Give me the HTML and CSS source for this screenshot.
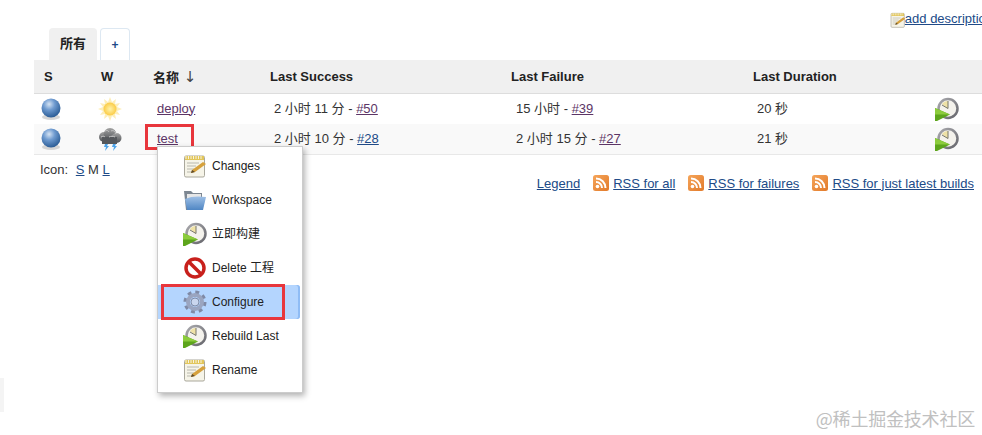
FILE: index.html
```html
<!DOCTYPE html>
<html lang="en">
<head>
<meta charset="UTF-8">
<meta name="viewport" content="width=device-width, initial-scale=1.0">
<title>Jenkins</title>
<link rel="stylesheet" href="styles.css">
</head>
<body>

<svg class="sprites" width="0" height="0" aria-hidden="true">
    <defs>
        <radialGradient id="ballFill" cx="40%" cy="30%" r="75%">
            <stop offset="0" stop-color="#d5e3f3"/>
            <stop offset="0.4" stop-color="#6f9bd0"/>
            <stop offset="1" stop-color="#23558f"/>
        </radialGradient>
        <radialGradient id="sunFill" cx="50%" cy="50%" r="50%">
            <stop offset="0" stop-color="#fff3a8"/>
            <stop offset="1" stop-color="#fbcb45"/>
        </radialGradient>
        <linearGradient id="cloudFill" x1="0" y1="0" x2="0" y2="1">
            <stop offset="0" stop-color="#a2a2a2"/>
            <stop offset="1" stop-color="#4e5155"/>
        </linearGradient>
        <linearGradient id="ringFill" x1="0" y1="0" x2="1" y2="1">
            <stop offset="0" stop-color="#a9a9ad"/>
            <stop offset="1" stop-color="#66666c"/>
        </linearGradient>
        <linearGradient id="rssFill" x1="0" y1="0" x2="1" y2="1">
            <stop offset="0" stop-color="#f5a55a"/>
            <stop offset="1" stop-color="#e27a2a"/>
        </linearGradient>
        <linearGradient id="folderFill" x1="0" y1="0" x2="0" y2="1">
            <stop offset="0" stop-color="#9fc0e6"/>
            <stop offset="1" stop-color="#4f86c4"/>
        </linearGradient>
    </defs>
    <symbol id="i-ball" viewBox="0 0 24 24">
        <ellipse cx="12" cy="20" rx="9" ry="3" fill="#bbb" opacity="0.6"/>
        <circle cx="12" cy="11" r="9.5" fill="url(#ballFill)"/>
    </symbol>
    <symbol id="i-sun" viewBox="0 0 24 24">
        <path d="M12 0l2 5 4-3-1 5 5-1-3 4 5 2-5 2 3 4-5-1 1 5-4-3-2 5-2-5-4 3 1-5-5 1 3-4-5-2 5-2-3-4 5 1-1-5 4 3z" fill="#fdeeb8"/>
        <circle cx="12" cy="12" r="6.5" fill="url(#sunFill)"/>
    </symbol>
    <symbol id="i-storm" viewBox="0 0 24 24">
        <circle cx="6" cy="10" r="5" fill="url(#cloudFill)"/>
        <circle cx="12" cy="7.500" r="6.500" fill="url(#cloudFill)"/>
        <circle cx="18.500" cy="11" r="5" fill="url(#cloudFill)"/>
        <rect x="4" y="10" width="15" height="7" fill="#55585c"/>
        <path d="M6 5c2-2 4-2 5 0M13 4c2-1 4 0 5 3M3 10c2-1 3-1 4 0M11 10c2-1 4-1 6 0" fill="none" stroke="#c8c8c8"/>
        <path d="M7 17h3l-1 2h2l-4 5 1-4H6zM15 17h3l-1 2h2l-4 5 1-4h-2z" fill="#4da3e8"/>
    </symbol>
    <symbol id="i-clock" viewBox="0 0 24 24">
        <circle cx="13" cy="11.500" r="9.500" fill="#f4f2ec" stroke="url(#ringFill)" stroke-width="2.500"/>
        <path d="M13 11.500V4a7.500 7.500 0 0 0-6 3z" fill="#efe2a6"/>
        <path d="M13 4v7.500L7 8" fill="none" stroke="#77776a"/>
        <path d="M0 11l15 6.500L0 25z" fill="#5da51c"/>
        <path d="M0 11l15 6.500H0z" fill="#8ccc3c"/>
    </symbol>
    <symbol id="i-note" viewBox="0 0 24 24">
        <rect x="1.500" y="2" width="20" height="21" rx="1.500" fill="#f6f4e8" stroke="#aaa89c"/>
        <path d="M2 2h19v4H2z" fill="#e2c65a"/>
        <path d="M3 2v3M5.500 2v3M8 2v3M10.500 2v3M13 2v3M15.500 2v3M18 2v3" stroke="#fff" stroke-width="0.8"/>
        <path d="M4 9h12M4 12h9M4 15h7M4 18h6" stroke="#b8b8ae"/>
        <path d="M8 19l1-3L20 8l3 2-11 8z" fill="#d6a13c"/>
        <path d="M8 19l1-3 3 2z" fill="#5b4a2c"/>
    </symbol>
    <symbol id="i-folder" viewBox="0 0 24 24">
        <path d="M1 3h7l2 2h9v17H3z" fill="#7d8792"/>
        <path d="M4 6h14v8H4z" fill="#e7e7e7"/>
        <path d="M2 11c6-3 14-3 21-2l-3 13H4z" fill="url(#folderFill)"/>
    </symbol>
    <symbol id="i-delete" viewBox="0 0 24 24">
        <circle cx="12" cy="12" r="9" fill="#fff" stroke="#c8201c" stroke-width="3.500"/>
        <path d="M5.500 5.500l13 13" stroke="#c8201c" stroke-width="3.500"/>
    </symbol>
    <symbol id="i-gear" viewBox="0 0 24 24">
        <circle cx="12" cy="12" r="9" fill="none" stroke="#7f8aa6" stroke-width="5" stroke-dasharray="3.500 3.570"/>
        <circle cx="12" cy="12" r="7" fill="none" stroke="#9aa5c0" stroke-width="4"/>
        <circle cx="12" cy="12" r="4" fill="#c9d6ee" stroke="#6d7894" stroke-width="0.8"/>
    </symbol>
    <symbol id="i-rss" viewBox="0 0 16 16">
        <rect width="16" height="16" rx="2.500" fill="url(#rssFill)"/>
        <circle cx="4.500" cy="11.500" r="1.800" fill="#fff"/>
        <path d="M3 7a6 6 0 0 1 6 6M3 3.500A9.500 9.500 0 0 1 12.500 13" fill="none" stroke="#fff" stroke-width="2"/>
    </symbol>
</svg>

<div class="main">
    <div class="desc-row">
        <svg class="icon-16"><use href="#i-note"/></svg>
        <a href="#">add description</a>
    </div>

    <div class="tabs">
        <div class="tab tab-active">所有</div>
        <div class="tab tab-new">+</div>
    </div>

    <table class="jobs">
        <thead>
            <tr>
                <th class="col-s">S</th>
                <th class="col-w">W</th>
                <th class="col-name">名称 <span class="sort-arrow">↓</span></th>
                <th class="col-time">Last Success</th>
                <th class="col-fail">Last Failure</th>
                <th class="col-dur">Last Duration</th>
                <th></th>
            </tr>
        </thead>
        <tbody>
            <tr>
                <td class="icon-cell"><svg class="icon-24"><use href="#i-ball"/></svg></td>
                <td class="icon-cell"><svg class="icon-24"><use href="#i-sun"/></svg></td>
                <td><a class="visited" href="#">deploy</a></td>
                <td>2 小时 11 分 - <a class="visited" href="#">#50</a></td>
                <td>15 小时 - <a class="visited" href="#">#39</a></td>
                <td>20 秒</td>
                <td class="icon-cell"><svg class="icon-24"><use href="#i-clock"/></svg></td>
            </tr>
            <tr>
                <td class="icon-cell"><svg class="icon-24"><use href="#i-ball"/></svg></td>
                <td class="icon-cell"><svg class="icon-24"><use href="#i-storm"/></svg></td>
                <td><a class="visited" href="#">test</a></td>
                <td>2 小时 10 分 - <a href="#">#28</a></td>
                <td>2 小时 15 分 - <a class="visited" href="#">#27</a></td>
                <td>21 秒</td>
                <td class="icon-cell"><svg class="icon-24"><use href="#i-clock"/></svg></td>
            </tr>
        </tbody>
    </table>

    <div class="table-foot">
        <div class="icon-size">Icon: <a class="size-first" href="#">S</a> M <a href="#">L</a></div>
        <div class="feeds">
            <a class="legend" href="#">Legend</a>
            <span class="feed"><svg class="icon-16"><use href="#i-rss"/></svg><a href="#">RSS for all</a></span>
            <span class="feed"><svg class="icon-16"><use href="#i-rss"/></svg><a href="#">RSS for failures</a></span>
            <span class="feed"><svg class="icon-16"><use href="#i-rss"/></svg><a href="#">RSS for just latest builds</a></span>
        </div>
    </div>
</div>

<div class="mark mark-test"></div>

<div class="menu">
    <div class="menu-item"><svg class="icon-24"><use href="#i-note"/></svg>Changes</div>
    <div class="menu-item"><svg class="icon-24"><use href="#i-folder"/></svg>Workspace</div>
    <div class="menu-item"><svg class="icon-24"><use href="#i-clock"/></svg>立即构建</div>
    <div class="menu-item"><svg class="icon-24"><use href="#i-delete"/></svg>Delete 工程</div>
    <div class="menu-item menu-item-on"><svg class="icon-24"><use href="#i-gear"/></svg>Configure</div>
    <div class="menu-item"><svg class="icon-24"><use href="#i-clock"/></svg>Rebuild Last</div>
    <div class="menu-item"><svg class="icon-24"><use href="#i-note"/></svg>Rename</div>
    <div class="mark mark-configure"></div>
</div>

<div class="edge-scrap"></div>
<div class="watermark">@稀土掘金技术社区</div>

</body>
</html>
```

FILE: styles.css
```css
html, body {
    height: 100%;
}
body {
    font-family: "Liberation Sans", Arial, "Noto Sans CJK SC", sans-serif;
    font-size: 13px;
    color: #333;
    margin: 0;
    padding: 0;
    background-color: #fff;
    overflow: hidden;
    position: relative;
}
a {
    color: #204a87;
}
a.visited {
    color: #5c3566;
}
.sprites {
    position: absolute;
}
.icon-16 {
    width: 16px;
    height: 16px;
    flex: none;
}
.icon-24 {
    width: 24px;
    height: 24px;
    flex: none;
    display: block;
}
.main {
    padding-left: 34px;
}
.desc-row {
    display: flex;
    justify-content: flex-end;
    align-items: center;
    height: 19px;
    padding-top: 9px;
    margin-right: -11px;
    white-space: nowrap;
}
.desc-row .icon-16 {
    margin-top: 3px;
    margin-right: -1px;
}
.tabs {
    display: flex;
    align-items: flex-end;
    gap: 3px;
    margin-left: 15px;
    height: 32px;
}
.tab {
    box-sizing: border-box;
    height: 32px;
    line-height: 32px;
    text-align: center;
    border-radius: 4px 4px 0 0;
}
.tab-active {
    width: 48px;
    background-color: #f0f0f0;
    font-weight: bold;
    color: #222;
}
.tab-new {
    width: 30px;
    border: 1px solid #dde8f2;
    border-bottom: none;
    color: #204a87;
    font-weight: bold;
    font-size: 12px;
}
.jobs {
    width: 948px;
    table-layout: fixed;
    border-collapse: collapse;
}
.jobs th {
    height: 33px;
    padding: 0 0 0 10px;
    background-color: #f0f0f0;
    border-bottom: 1px solid #ddd;
    text-align: left;
    color: #222;
}
.jobs td {
    height: 28px;
    padding: 0 0 2px 14px;
    line-height: 15px;
}
.jobs td:nth-child(5) {
    padding-left: 15px;
}
.jobs tbody tr:nth-child(2) td {
    background-color: #f9f9f9;
    border-bottom: 1px solid #e8e8e8;
}
.jobs .icon-cell {
    padding-bottom: 0;
    height: 30px;
}
.col-s {
    width: 47px;
}
.col-w {
    width: 42px;
}
.col-name {
    width: 107px;
}
.col-time {
    width: 231px;
}
.col-fail {
    width: 232px;
}
.col-dur {
    width: 172px;
}
.sort-arrow {
    font-family: "DejaVu Sans", sans-serif;
    font-size: 15px;
    font-weight: normal;
    color: #444;
    margin-left: 1px;
}
.jobs td:nth-child(1).icon-cell {
    padding-left: 5px;
}
.jobs td:nth-child(2).icon-cell {
    padding-left: 7px;
}
.jobs td:nth-child(7).icon-cell {
    padding-left: 10px;
}
.table-foot {
    display: flex;
    justify-content: space-between;
    align-items: flex-start;
    padding: 7px 8px 0 6px;
}
.icon-size {
    line-height: 16px;
}
.size-first {
    margin-left: 4px;
}
.feeds {
    display: flex;
    align-items: center;
    gap: 13px;
    padding-top: 13px;
}
.feed {
    display: flex;
    align-items: center;
    gap: 4px;
}
.menu {
    position: absolute;
    left: 157px;
    top: 146px;
    width: 146px;
    box-sizing: border-box;
    padding: 2px 0 5px;
    background-color: #fff;
    border: 1px solid #ccc;
    box-shadow: 2px 3px 6px rgba(0, 0, 0, 0.3);
    font-size: 12px;
    line-height: 14px;
    color: #222;
}
.menu-item {
    display: flex;
    align-items: center;
    gap: 5px;
    height: 34px;
    padding-left: 25px;
    box-sizing: border-box;
}
.menu-item-on {
    background-color: #b4d5fe;
    margin-right: 2px;
    border-radius: 0 3px 3px 0;
    box-shadow: inset -2px 0 0 #8fbcf5;
}
.mark {
    position: absolute;
    box-sizing: border-box;
    border: 3px solid #e8363c;
}
.mark-test {
    left: 145px;
    top: 124px;
    width: 49px;
    height: 26px;
}
.mark-configure {
    left: 3px;
    top: 137px;
    width: 124px;
    height: 36px;
}
.edge-scrap {
    position: absolute;
    left: 0;
    top: 378px;
    width: 4px;
    height: 34px;
    background-color: #f4f4f4;
}
.watermark {
    position: absolute;
    right: 7px;
    bottom: 6px;
    font-family: "Noto Sans CJK SC", sans-serif;
    font-size: 18px;
    line-height: 22px;
    letter-spacing: -0.2px;
    color: #c0c0c0;
    white-space: nowrap;
}
```
